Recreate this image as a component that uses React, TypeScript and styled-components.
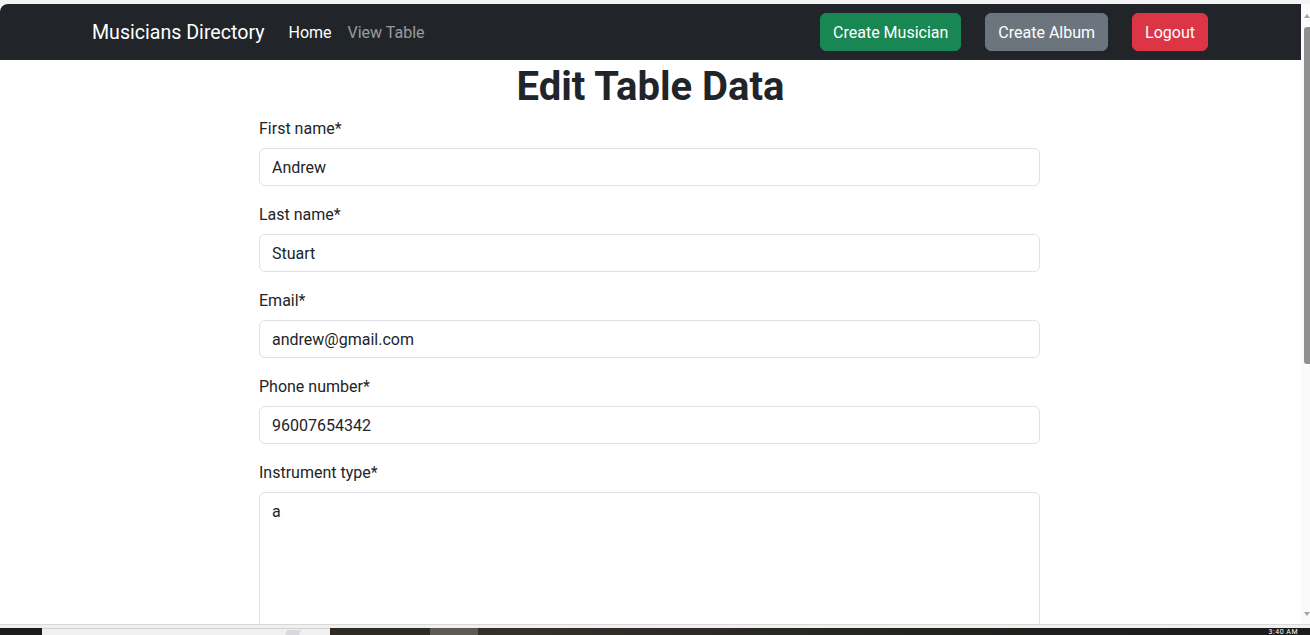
import React from "react";
import styled, { createGlobalStyle } from "styled-components";

const GlobalStyle = createGlobalStyle`
  html, body {
    margin: 0;
    padding: 0;
    overflow: hidden;
    background: #f3f3f3;
  }
  * { box-sizing: border-box; }
  body {
    font-family: Roboto, "Noto Sans", Arial, sans-serif;
    color: #212529;
  }
`;

const Frame = styled.div`
  width: 1310px;
  height: 635px;
  display: flex;
  flex-direction: column;
  background: #f3f3f3;
`;

const TopStrip = styled.div`
  height: 4px;
  flex: none;
  background: #f3f3f3;
`;

const Window = styled.div`
  height: 620px;
  flex: none;
  display: flex;
  background: #fafafa;
`;

const Page = styled.div`
  flex: 1;
  overflow: hidden;
  background: #ffffff;
  border-top-left-radius: 8px;
`;

const Navbar = styled.nav`
  height: 56px;
  background: #212529;
  display: flex;
  align-items: center;
  padding: 0 93px 0 92px;
`;

const Brand = styled.a`
  color: #ffffff;
  font-size: 19.6px;
  line-height: 30px;
  padding-top: 2px;
  margin-right: 16px;
  text-decoration: none;
`;

const NavLinks = styled.div`
  display: flex;
  align-items: center;
  padding-top: 2px;
`;

const NavLink = styled.a<{ $active?: boolean }>`
  color: ${(p) => (p.$active ? "#ffffff" : "rgba(255,255,255,0.55)")};
  font-size: 16px;
  line-height: 24px;
  padding: 8px;
  text-decoration: none;
`;

const NavActions = styled.div`
  margin-left: auto;
  display: flex;
  align-items: center;
  gap: 24px;
`;

const Button = styled.button<{ $bg: string }>`
  height: 38px;
  padding: 1px 12px 0;
  border: 1px solid ${(p) => p.$bg};
  border-radius: 6px;
  background: ${(p) => p.$bg};
  color: #ffffff;
  font-family: inherit;
  font-size: 16px;
  line-height: 24px;
  cursor: pointer;
`;

const Main = styled.main`
  display: flex;
  flex-direction: column;
  align-items: center;
`;

const Title = styled.h1`
  margin: 3px 0 5px;
  font-size: 40px;
  line-height: 48px;
  font-weight: 700;
  color: #212529;
  text-align: center;
`;

const Form = styled.form`
  width: 781px;
  margin-left: -2px;
  display: flex;
  flex-direction: column;
`;

const Field = styled.div`
  display: flex;
  flex-direction: column;
  margin-bottom: 16px;
`;

const Label = styled.label`
  font-size: 16px;
  line-height: 24px;
  padding-top: 1px;
  margin-bottom: 7px;
  color: #212529;
`;

const Input = styled.input`
  height: 38px;
  padding: 6px 12px;
  border: 1px solid #dee2e6;
  border-radius: 6px;
  font-family: inherit;
  font-size: 16px;
  line-height: 24px;
  color: #212529;
  background: #ffffff;
  outline: none;
`;

const TextArea = styled.textarea`
  height: 200px;
  padding: 7px 12px 6px;
  border: 1px solid #dee2e6;
  border-radius: 6px;
  font-family: inherit;
  font-size: 16px;
  line-height: 24px;
  color: #212529;
  background: #ffffff;
  resize: none;
  outline: none;
`;

const Scrollbar = styled.div`
  width: 9px;
  flex: none;
  display: flex;
  flex-direction: column;
  align-items: flex-end;
  background: #fafafa;
  padding-top: 10px;
  padding-bottom: 8px;
`;

const Arrow = styled.div<{ $down?: boolean }>`
  width: 0;
  height: 0;
  border-left: 3.5px solid transparent;
  border-right: 3.5px solid transparent;
  ${(p) =>
    p.$down
      ? "border-top: 4px solid #a3a3a3;"
      : "border-bottom: 4px solid #a3a3a3;"}
`;

const Thumb = styled.div`
  width: 6px;
  height: 337px;
  margin-top: 9px;
  background: #8f8f8f;
  border-radius: 3px 0 0 3px;
`;

const Spacer = styled.div`
  flex: 1;
`;

const BottomEdge = styled.div`
  height: 1px;
  flex: none;
  background: #d9d9d9;
`;

const BottomGap = styled.div`
  height: 3px;
  flex: none;
  background: #f0f0f0;
`;

const Taskbar = styled.div`
  flex: 1;
  display: flex;
  background: linear-gradient(90deg, #2c2822 0%, #34302a 40%, #1f1f1d 80%, #1b1b1b 100%);
`;

const TaskSeg = styled.div<{ $w: number; $bg: string }>`
  width: ${(p) => p.$w}px;
  flex: none;
  background: ${(p) => p.$bg};
`;

const LightSeg = styled.div`
  width: 288px;
  flex: none;
  background: #f0f0f0;
  border-top: 1px solid #d0d0d0;
  display: flex;
  justify-content: flex-end;
  padding-right: 30px;
`;

const Tab = styled.div`
  width: 14px;
  height: 6px;
  margin-top: 1px;
  background: #d8d8e0;
  transform: skewX(-20deg);
`;

const Clock = styled.div`
  margin-left: auto;
  margin-right: 12px;
  color: #ffffff;
  font-size: 7px;
  line-height: 8px;
  letter-spacing: 0.5px;
`;

const fields = [
  { label: "First name*", value: "Andrew", type: "text" },
  { label: "Last name*", value: "Stuart", type: "text" },
  { label: "Email*", value: "andrew@gmail.com", type: "email" },
  { label: "Phone number*", value: "96007654342", type: "text" },
];

export default function App() {
  return (
    <>
      <GlobalStyle />
      <Frame>
        <TopStrip />
        <Window>
          <Page>
            <Navbar>
              <Brand href="#">Musicians Directory</Brand>
              <NavLinks>
                <NavLink href="#" $active>
                  Home
                </NavLink>
                <NavLink href="#">View Table</NavLink>
              </NavLinks>
              <NavActions>
                <Button $bg="#198754">Create Musician</Button>
                <Button $bg="#6c757d">Create Album</Button>
                <Button $bg="#dc3545">Logout</Button>
              </NavActions>
            </Navbar>
            <Main>
              <Title>Edit Table Data</Title>
              <Form>
                {fields.map((f) => (
                  <Field key={f.label}>
                    <Label>{f.label}</Label>
                    <Input type={f.type} defaultValue={f.value} />
                  </Field>
                ))}
                <Field>
                  <Label>Instrument type*</Label>
                  <TextArea defaultValue="a" />
                </Field>
              </Form>
            </Main>
          </Page>
          <Scrollbar>
            <Arrow />
            <Thumb />
            <Spacer />
            <Arrow $down />
          </Scrollbar>
        </Window>
        <BottomEdge />
        <BottomGap />
        <Taskbar>
          <TaskSeg $w={42} $bg="#1c1c1c" />
          <LightSeg>
            <Tab />
          </LightSeg>
          <TaskSeg $w={100} $bg="#2f2a24" />
          <TaskSeg $w={48} $bg="#5c5a52" />
          <Clock>3:40 AM</Clock>
        </Taskbar>
      </Frame>
    </>
  );
}
